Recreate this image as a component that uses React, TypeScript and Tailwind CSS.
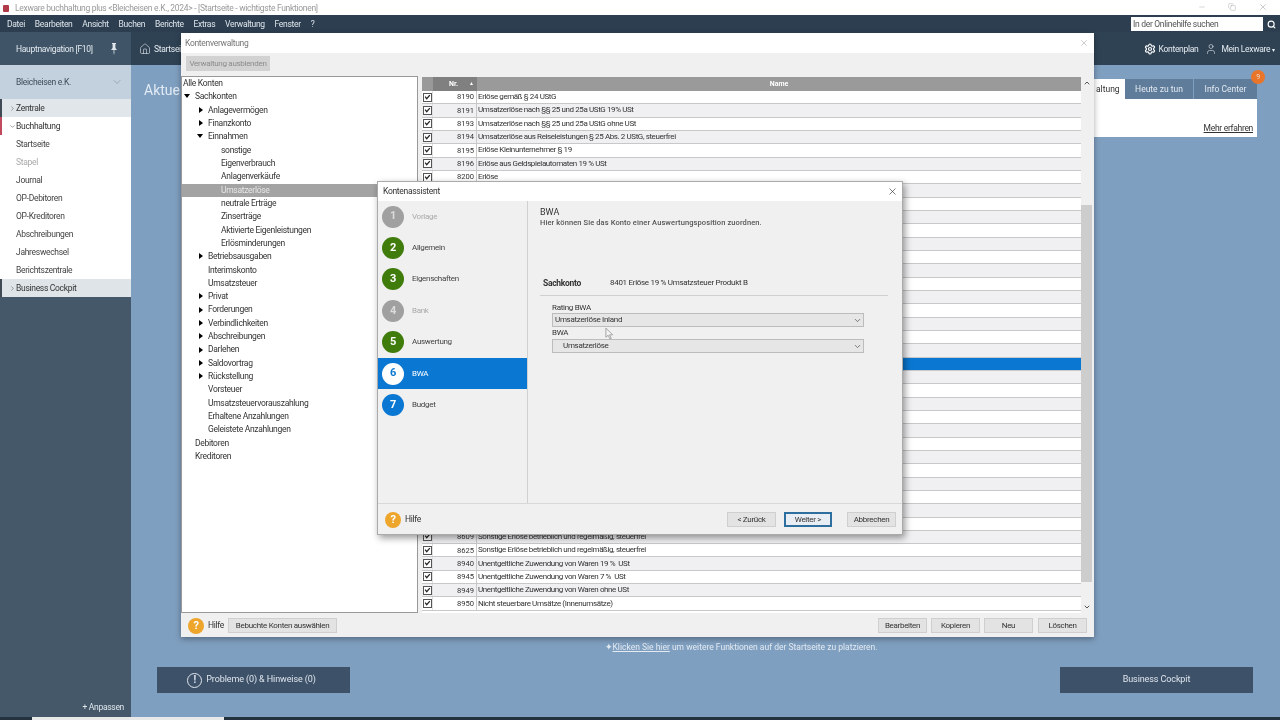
import React from 'react';
import { ChevronDown, ChevronRight, Home, Search, Settings, User, X, Minus, Copy } from 'lucide-react';

const font = "font-['Roboto',sans-serif]";

const treeRows: { label: string; indent: number; arrow?: 'open' | 'closed'; selected?: boolean }[] = [
  { label: 'Alle Konten', indent: 0 },
  { label: 'Sachkonten', indent: 1, arrow: 'open' },
  { label: 'Anlagevermögen', indent: 2, arrow: 'closed' },
  { label: 'Finanzkonto', indent: 2, arrow: 'closed' },
  { label: 'Einnahmen', indent: 2, arrow: 'open' },
  { label: 'sonstige', indent: 3 },
  { label: 'Eigenverbrauch', indent: 3 },
  { label: 'Anlagenverkäufe', indent: 3 },
  { label: 'Umsatzerlöse', indent: 3, selected: true },
  { label: 'neutrale Erträge', indent: 3 },
  { label: 'Zinserträge', indent: 3 },
  { label: 'Aktivierte Eigenleistungen', indent: 3 },
  { label: 'Erlösminderungen', indent: 3 },
  { label: 'Betriebsausgaben', indent: 2, arrow: 'closed' },
  { label: 'Interimskonto', indent: 2 },
  { label: 'Umsatzsteuer', indent: 2 },
  { label: 'Privat', indent: 2, arrow: 'closed' },
  { label: 'Forderungen', indent: 2, arrow: 'closed' },
  { label: 'Verbindlichkeiten', indent: 2, arrow: 'closed' },
  { label: 'Abschreibungen', indent: 2, arrow: 'closed' },
  { label: 'Darlehen', indent: 2, arrow: 'closed' },
  { label: 'Saldovortrag', indent: 2, arrow: 'closed' },
  { label: 'Rückstellung', indent: 2, arrow: 'closed' },
  { label: 'Vorsteuer', indent: 2 },
  { label: 'Umsatzsteuervorauszahlung', indent: 2 },
  { label: 'Erhaltene Anzahlungen', indent: 2 },
  { label: 'Geleistete Anzahlungen', indent: 2 },
  { label: 'Debitoren', indent: 1 },
  { label: 'Kreditoren', indent: 1 },
];

const indentClass = ['pl-[1px]', 'pl-[13px]', 'pl-[26px]', 'pl-[39px]'];
const openArrow = ['', 'left-[2px]', 'left-[15px]', ''];

const topAccounts = [
  ['8190', 'Erlöse gemäß § 24 UStG'],
  ['8191', 'Umsatzerlöse nach §§ 25 und 25a UStG 19% USt'],
  ['8193', 'Umsatzerlöse nach §§ 25 und 25a UStG ohne USt'],
  ['8194', 'Umsatzerlöse aus Reiseleistungen § 25 Abs. 2 UStG, steuerfrei'],
  ['8195', 'Erlöse Kleinunternehmer § 19'],
  ['8196', 'Erlöse aus Geldspielautomaten 19 % USt'],
  ['8200', 'Erlöse'],
];

const bottomAccounts = [
  ['8609', 'Sonstige Erlöse betrieblich und regelmäßig, steuerfrei'],
  ['8625', 'Sonstige Erlöse betrieblich und regelmäßig, steuerfrei'],
  ['8940', 'Unentgeltliche Zuwendung von Waren 19 %  USt'],
  ['8945', 'Unentgeltliche Zuwendung von Waren 7 %  USt'],
  ['8949', 'Unentgeltliche Zuwendung von Waren ohne USt'],
  ['8950', 'Nicht steuerbare Umsätze (Innenumsätze)'],
];

const accounts: string[][] = [
  ...topAccounts,
  ...Array.from({ length: 26 }, () => ['', '']),
  ...bottomAccounts,
];

const steps = [
  { n: 1, label: 'Vorlage', tone: 'gray' },
  { n: 2, label: 'Allgemein', tone: 'green' },
  { n: 3, label: 'Eigenschaften', tone: 'green' },
  { n: 4, label: 'Bank', tone: 'gray' },
  { n: 5, label: 'Auswertung', tone: 'green' },
  { n: 6, label: 'BWA', tone: 'active' },
  { n: 7, label: 'Budget', tone: 'blue' },
];

const sideItems = ['Startseite', 'Stapel', 'Journal', 'OP-Debitoren', 'OP-Kreditoren', 'Abschreibungen', 'Jahreswechsel', 'Berichtszentrale'];

function Check() {
  return (
    <svg viewBox="0 0 9 9" className="w-[9px] h-[9px] bg-white border border-[#555]">
      <path d="M1.5 3.5 L3.5 6 L7.5 1.5" fill="none" stroke="#222" strokeWidth="1.6" />
    </svg>
  );
}

function HelpBadge() {
  return (
    <span className="w-4 h-4 rounded-full bg-[#eea52c] text-white text-[11px] font-bold flex items-center justify-center leading-none">?</span>
  );
}

function Btn({ children, className = '', primary = false }: { children: React.ReactNode; className?: string; primary?: boolean }) {
  const look = primary ? 'bg-[#e8eef3] border-[2px] border-[#2f6f9f]' : 'bg-[#e3e3e3] border border-[#cfcfcf]';
  return (
    <div className={`h-[15px] flex items-center justify-center whitespace-nowrap text-[8px] text-[#333] ${look} ${className}`}>
      {children}
    </div>
  );
}

function Select({ value, inset }: { value: string; inset: string }) {
  return (
    <div className={`h-[14px] w-[312px] flex items-center justify-between bg-[#e6e6e6] border border-[#bcbcbc] pr-[1px] text-[8px] text-[#333] ${inset}`}>
      <span>{value}</span>
      <ChevronDown size={9} className="text-[#555]" />
    </div>
  );
}

function Sidebar() {
  return (
    <aside className="w-[131px] shrink-0 flex flex-col bg-[#445869]">
      <div className="h-[33px] shrink-0 flex items-center pl-[16px] pr-[13px] pt-[1px] justify-between bg-[#3f5467] text-[#e5ebf0]">
        <span>Hauptnavigation [F10]</span>
        <svg viewBox="0 0 8 12" className="w-[8px] h-[12px]" fill="#dfe6ec">
          <path d="M2 0h4v1H5.4v4L7 7H1l1.600-2V1H2z" />
          <path d="M3.600 7h.8v3l-.4 2-.4-2z" />
        </svg>
      </div>
      <div className="h-[34px] shrink-0 flex items-center justify-between pl-[16px] pr-[8px] bg-[#c3d0de] text-[#3e4d5b]">
        <span>Bleicheisen e.K.</span>
        <ChevronDown size={12} strokeWidth={1} className="text-[#6e7f90]" />
      </div>
      <div className="h-[18px] shrink-0 flex items-center pl-[7px] bg-[#e1e6ea] border-l-[2px] border-[#404a55] text-[#333]">
        <ChevronRight size={7} className="text-[#666]" />
        Zentrale
      </div>
      <div className="h-[18px] shrink-0 flex items-center pl-[7px] bg-white border-l-[2px] border-[#c24a5f] text-[#333]">
        <ChevronDown size={7} className="text-[#666]" />
        Buchhaltung
      </div>
      <div className="bg-white shrink-0">
        {sideItems.map(item => (
          <div key={item} className={`h-[18px] flex items-center pl-[16px] ${item === 'Stapel' ? 'text-[#aaa]' : 'text-[#444]'}`}>
            {item}
          </div>
        ))}
      </div>
      <div className="h-[18px] shrink-0 flex items-center pl-[7px] bg-[#dfe4e9] border-l-[2px] border-[#404a55] text-[#333]">
        <ChevronRight size={7} className="text-[#666]" />
        Business Cockpit
      </div>
      <div className="flex-1 flex items-end justify-end pr-[7px] pb-[3px] text-[#dfe6ec]">+ Anpassen</div>
    </aside>
  );
}

function MainArea() {
  return (
    <main className="flex-1 flex flex-col bg-[#7f9fc0]">
      <div className="h-[33px] shrink-0 flex items-center justify-between pl-[8px] pr-[5px] pt-[1px] bg-[#2f4254] text-[#e5ebf0]">
        <div className="flex items-center gap-[3px]">
          <Home size={12} strokeWidth={1.2} />
          <span>Startseite</span>
        </div>
        <div className="flex items-center gap-[7px]">
          <div className="flex items-center gap-[3px]">
            <Settings size={12} strokeWidth={2.4} className="text-white" />
            <span>Kontenplan</span>
          </div>
          <div className="flex items-center gap-[4px]">
            <User size={12} strokeWidth={1.2} />
            <span>Mein Lexware</span>
            <span className="text-[6px] -ml-[2px]">▾</span>
          </div>
        </div>
      </div>
      <div className="relative flex-1 flex flex-col">
        <div className="flex justify-between pl-[13px] pr-[23px] pt-[14px]">
          <h1 className="mt-[1px] text-[14px] leading-[20px] tracking-normal text-[#e2ebf4]">Aktuelles</h1>
          <div className="relative w-[163px]">
            <div className="flex h-[20px] tracking-normal text-[#e3eaf1]">
              <div className="w-[31px] flex items-center bg-white text-[#333] pl-[2px]">altung</div>
              <div className="w-[68px] flex items-center justify-center bg-[#5f7c9b]">Heute zu tun</div>
              <div className="flex-1 flex items-center justify-center bg-[#5f7c9b] ml-px">Info Center</div>
            </div>
            <span className="absolute -top-[9px] right-[-8px] w-[14px] h-[14px] rounded-full bg-[#e8752a] text-[#f5d9c4] text-[7px] flex items-center justify-center">9</span>
            <div className="h-[38px] bg-white flex items-end justify-end pr-[4px] pb-[2px] text-[#333] underline">Mehr erfahren</div>
          </div>
        </div>
        <div className="flex-1 flex items-end justify-center pb-[63px] pl-[71px] tracking-normal text-[#e3eaf1]">
          <span>✦<span className="underline">Klicken Sie hier</span> um weitere Funktionen auf der Startseite zu platzieren.</span>
        </div>
        <div className="absolute left-[26px] right-[27px] bottom-[24px] flex justify-between text-[9px] tracking-[-0.1px] text-[#dfe6ee]">
          <div className="w-[193px] h-[26px] bg-[#3d5169] flex items-center justify-center gap-[4px] pr-[4px]">
            <span className="w-[15px] h-[15px] rounded-full border border-[#dfe6ee] flex items-center justify-center text-[10px] font-bold leading-none">!</span>
            Probleme (0) &amp; Hinweise (0)
          </div>
          <div className="w-[193px] h-[26px] bg-[#3d5169] flex items-center justify-center">Business Cockpit</div>
        </div>
      </div>
    </main>
  );
}

function AccountsWindow() {
  return (
    <section className="absolute left-[181px] top-[33px] w-[913px] h-[604px] flex flex-col bg-[#f0f0f0] shadow-[0_2px_6px_rgba(0,0,0,0.35)]">
      <div className="h-[20px] shrink-0 flex items-center justify-between pl-[4px] pr-[5px] bg-white text-[#777]">
        <span>Kontenverwaltung</span>
        <X size={10} strokeWidth={1} className="text-[#888]" />
      </div>
      <div className="h-[23px] shrink-0 flex items-center pl-[5px] pb-[2px]">
        <div className="h-[15px] w-[84px] flex items-center justify-center bg-[#d2d2d2] text-[8px] text-[#8c8c8c] whitespace-nowrap">Verwaltung ausblenden</div>
      </div>
      <div className="flex h-[537px] shrink-0">
        <div className="w-[237px] shrink-0 bg-white border border-[#999] overflow-hidden text-[#333]">
          {treeRows.map(row => (
            <div key={row.label} className={`relative h-[13.33px] flex items-center leading-none pb-[1px] ${indentClass[row.indent]} ${row.selected ? 'bg-[#a3a3a3] text-[#e6e6e6]' : ''}`}>
              {row.arrow === 'open' && <span className={`absolute ${openArrow[row.indent]} w-0 h-0 border-x-[3.5px] border-x-transparent border-t-[4px] border-t-black`} />}
              {row.arrow === 'closed' && <span className="absolute left-[17px] w-0 h-0 border-y-[3.5px] border-y-transparent border-l-[4px] border-l-black" />}
              {row.label}
            </div>
          ))}
        </div>
        <div className="w-[4px] shrink-0" />
        <div className="w-[659px] shrink-0 flex flex-col overflow-hidden bg-white text-[8px] tracking-[-0.4px] text-[#333] mt-[1px]">
          <div className="h-[14px] shrink-0 flex bg-[#9a9a9a] text-white font-bold text-[7px] tracking-normal">
            <div className="w-[11px] bg-[#999]" />
            <div className="w-[44px] bg-[#808080] flex items-center justify-between pl-[16px] pr-[3px]">
              <span>Nr.</span>
              <span className="text-[5px]">▲</span>
            </div>
            <div className="flex-1 flex items-center justify-center">Name</div>
          </div>
          {accounts.map((row, i) => (
            <div key={i} className={`h-[13.33px] shrink-0 flex items-center border-b border-[#c8c8c8] ${i === 20 ? 'bg-[#0a78d2]' : i % 2 ? 'bg-[#f0f0f3]' : 'bg-white'}`}>
              <div className="w-[11px] shrink-0 flex justify-center h-full items-center border-r border-[#e0e0e0]"><Check /></div>
              <div className="w-[44px] shrink-0 text-right pr-[2px] border-r border-[#c8c8c8] h-full flex items-center justify-end tracking-normal text-[7.6px]">{row[0]}</div>
              <div className="pl-[1px] whitespace-pre">{row[1]}</div>
            </div>
          ))}
        </div>
        <div className="flex-1 flex flex-col items-center justify-between bg-[#f0f0f0] text-[#555] pr-[2px]">
          <ChevronDown size={8} strokeWidth={3} className="rotate-180 mt-[3px]" />
          <div className="w-full flex-1 mt-[118px] mb-[21px] bg-[#cdcdcd]" />
          <ChevronDown size={8} strokeWidth={3} className="mb-[2px]" />
        </div>
      </div>
      <div className="flex-1 flex items-center justify-between pl-[7px] pr-[7px] pt-[1px] text-[#333]">
        <div className="flex items-center gap-[3px]">
          <HelpBadge />
          <span className="mr-[1px] ml-[1px]">Hilfe</span>
          <Btn className="w-[109px]">Bebuchte Konten auswählen</Btn>
        </div>
        <div className="flex items-center gap-[4px]">
          <Btn className="w-[49px]">Bearbeiten</Btn>
          <Btn className="w-[49px]">Kopieren</Btn>
          <Btn className="w-[49px]">Neu</Btn>
          <Btn className="w-[49px] ml-[1px]">Löschen</Btn>
        </div>
      </div>
    </section>
  );
}

function StepBadge({ n, tone }: { n: number; tone: string }) {
  const tones: Record<string, string> = {
    gray: 'bg-[#a0a0a0] text-[#dcdcdc]',
    green: 'bg-[#3f7c0c] text-white',
    active: 'bg-white text-[#0a78d2]',
    blue: 'bg-[#0a78d2] text-white',
  };
  return (
    <span className={`w-[22px] h-[22px] rounded-full flex items-center justify-center text-[11px] font-bold ${tones[tone]}`}>{n}</span>
  );
}

function AccountDialog() {
  return (
    <section className="absolute left-[377px] top-[181px] w-[526px] h-[354px] flex flex-col bg-[#f0f0f0] border border-[#aaa] shadow-[2px_3px_7px_rgba(0,0,0,0.4)] text-[#333]">
      <div className="h-[19px] shrink-0 flex items-center justify-between pl-[5px] pr-[4px] pb-[1px] bg-white">
        <span>Kontenassistent</span>
        <X size={11} strokeWidth={1.4} className="text-[#333]" />
      </div>
      <div className="h-[303px] shrink-0 flex border-b border-[#d8d8d8]">
        <div className="w-[150px] shrink-0 border-r border-[#d0d0d0]">
          {steps.map(step => (
            <div key={step.n} className={`h-[31.4px] flex items-center gap-[8px] pl-[4px] ${step.tone === 'active' ? 'bg-[#0a78d2] text-white' : step.tone === 'gray' ? 'text-[#aaa]' : 'text-[#444]'}`}>
              <StepBadge n={step.n} tone={step.tone} />
              <span className="text-[8px]">{step.label}</span>
            </div>
          ))}
        </div>
        <div className="flex-1 flex flex-col pl-[12px] pt-[5px]">
          <div className="text-[9px] leading-[12px] tracking-normal">BWA</div>
          <div className="text-[7.5px] leading-[9px] font-medium text-[#555] tracking-[0.1px]">Hier können Sie das Konto einer Auswertungsposition zuordnen.</div>
          <div className="flex items-center mt-[49px] ml-[3px] h-[14px]">
            <span className="w-[67px] font-bold">Sachkonto</span>
            <span className="text-[8px]">8401 Erlöse 19 % Umsatzsteuer Produkt B</span>
          </div>
          <div className="w-[348px] h-px bg-[#cfcfcf] mt-[5px]" />
          <div className="ml-[12px] mt-[6px] flex flex-col text-[8px]">
            <span className="leading-[11px]">Rating BWA</span>
            <Select value="Umsatzerlöse Inland" inset="pl-[2px]" />
            <span className="leading-[12px]">BWA</span>
            <Select value="Umsatzerlöse" inset="pl-[10px]" />
          </div>
        </div>
      </div>
      <div className="flex-1 flex items-center justify-between pl-[7px] pr-[6px] pt-[1px]">
        <div className="flex items-center gap-[4px]">
          <HelpBadge />
          <span>Hilfe</span>
        </div>
        <div className="flex items-center">
          <Btn className="w-[49px]">&lt; Zurück</Btn>
          <Btn primary className="w-[48px] ml-[8px]">Weiter &gt;</Btn>
          <Btn className="w-[49px] ml-[15px]">Abbrechen</Btn>
        </div>
      </div>
      <svg viewBox="0 0 10 14" className="absolute left-[227px] top-[145px] w-[9px] h-[13px]" fill="#f4f4f4" stroke="#888" strokeWidth="0.8">
        <path d="M1 1 L1 11 L3.500 9 L5.500 13 L7 12.300 L5 8.500 L8.500 8.500 Z" />
      </svg>
    </section>
  );
}

export default function App() {
  return (
    <div className={`relative w-[1280px] h-[720px] overflow-hidden flex flex-col bg-[#7f9fc0] blur-[0.35px] text-[8.5px] tracking-[-0.3px] ${font}`}>
      <header className="h-[15px] shrink-0 flex items-center justify-between pl-[3px] pr-[12px] pt-[1px] bg-white text-[#999]">
        <div className="flex items-center gap-[6px]">
          <span className="w-[6px] h-[7px] bg-[#b03a48] rounded-[1px]" />
          <span>Lexware buchhaltung plus &lt;Bleicheisen e.K., 2024&gt; - [Startseite - wichtigste Funktionen]</span>
        </div>
        <div className="flex items-center gap-[22px] text-[#888] mb-[3px]">
          <Minus size={8} strokeWidth={1} />
          <Copy size={8} strokeWidth={1} />
          <X size={10} strokeWidth={1} />
        </div>
      </header>
      <nav className="h-[17px] shrink-0 flex items-center justify-between pl-[7px] pr-[4px] pt-[1px] bg-[#2c3e50] text-[#dfe6ec]">
        <div className="flex items-center gap-[9.8px]">
          {['Datei', 'Bearbeiten', 'Ansicht', 'Buchen', 'Berichte', 'Extras', 'Verwaltung', 'Fenster', '?'].map(m => (
            <span key={m}>{m}</span>
          ))}
        </div>
        <div className="flex items-center gap-[4px]">
          <div className="w-[132px] h-[14px] bg-white pl-[2px] flex items-center text-[#555]">In der Onlinehilfe suchen</div>
          <Search size={9} strokeWidth={3} className="text-white" />
        </div>
      </nav>
      <div className="flex flex-1 min-h-0">
        <Sidebar />
        <MainArea />
      </div>
      <div className="h-[3px] shrink-0 bg-[#24323f] pl-[32px]">
        <div className="w-[192px] h-full bg-[#e8e8e8]" />
      </div>
      <AccountsWindow />
      <AccountDialog />
    </div>
  );
}
